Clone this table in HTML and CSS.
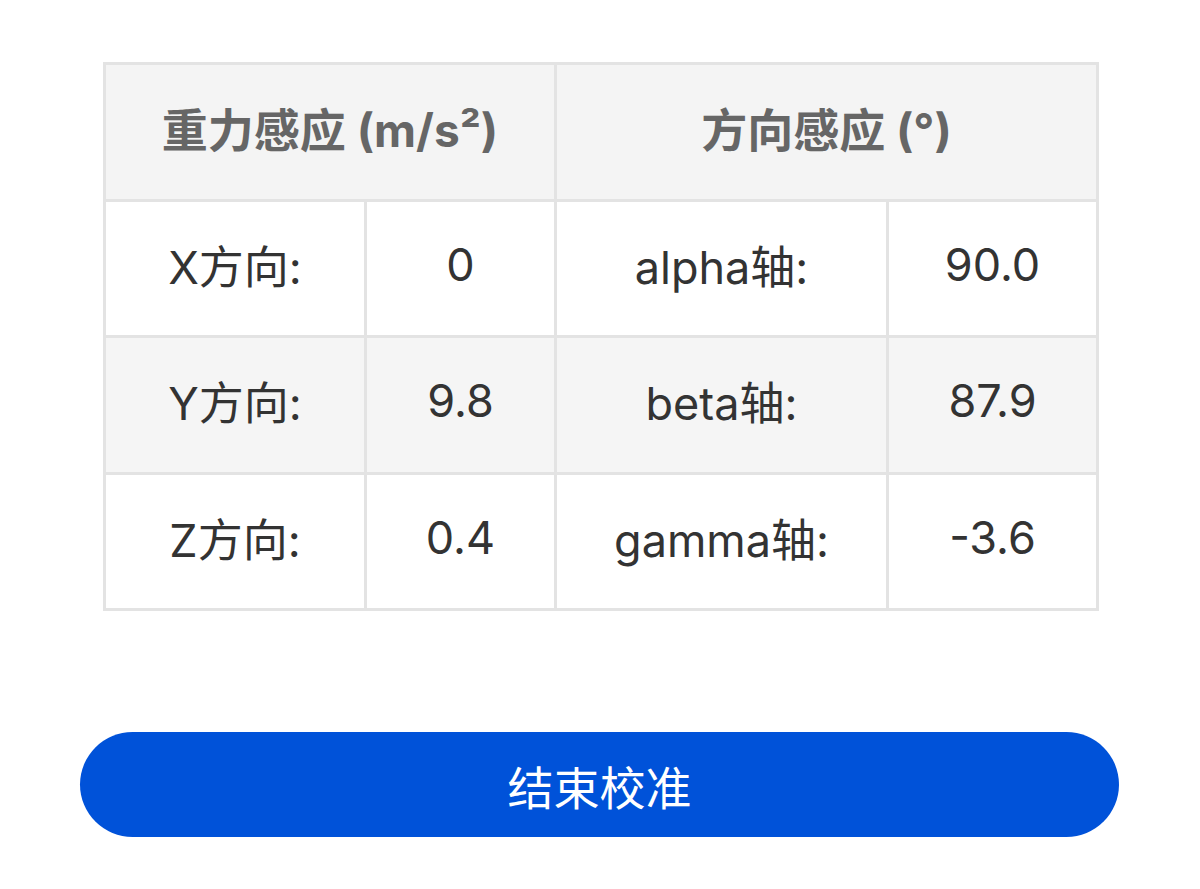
FILE: index.html
```html
<!DOCTYPE html>
<html lang="zh-CN">
<head>
<meta charset="utf-8">
<title>校准</title>
<link rel="stylesheet" href="styles.css">
</head>
<body>
<main class="page">
  <table class="sensor-table">
    <colgroup>
      <col class="c1"><col class="c2"><col class="c3"><col class="c4">
    </colgroup>
    <thead>
      <tr>
        <th colspan="2">重力感应 (m/s²)</th>
        <th colspan="2">方向感应 (°)</th>
      </tr>
    </thead>
    <tbody>
      <tr>
        <td>X方向:</td><td>0</td><td>alpha轴:</td><td>90.0</td>
      </tr>
      <tr class="striped">
        <td>Y方向:</td><td>9.8</td><td>beta轴:</td><td>87.9</td>
      </tr>
      <tr>
        <td>Z方向:</td><td>0.4</td><td>gamma轴:</td><td>-3.6</td>
      </tr>
    </tbody>
  </table>
  <div class="actions">
    <button class="end-btn" type="button">结束校准</button>
  </div>
</main>
</body>
</html>
```

FILE: styles.css
```css
html, body {
  margin: 0;
  padding: 0;
  background: #ffffff;
}

.page {
  width: 1200px;
  padding-top: 62px;
  box-sizing: border-box;
}

.sensor-table {
  margin-left: 103px;
  width: 993px;
  border-collapse: collapse;
  table-layout: fixed;
  border: 3px solid #e3e3e3;
}

.c1 { width: 261px; }
.c2 { width: 190px; }
.c3 { width: 332px; }
.c4 { width: 210px; }

.sensor-table th,
.sensor-table td {
  border: 3px solid #e3e3e3;
  text-align: center;
  vertical-align: middle;
  padding: 0 0 8px 0;
  height: 136.5px;
  box-sizing: border-box;
}

.sensor-table th {
  background: #f4f4f4;
  color: #666666;
  font-family: "Inter", "Noto Sans CJK SC", sans-serif;
  font-weight: 700;
  font-size: 46px;
  padding-bottom: 10px;
}

.sensor-table td {
  color: #333333;
  font-family: "Inter", "Noto Sans CJK SC", sans-serif;
  font-size: 45px;
  font-weight: 400;
}

.sensor-table tr.striped td {
  background: #f5f5f5;
}

.actions {
  margin-top: 121px;
  padding-left: 80px;
}

.end-btn {
  display: block;
  width: 1039px;
  height: 105px;
  border: none;
  border-radius: 53px;
  background: #0052d9;
  color: #ffffff;
  font-family: "Noto Sans CJK SC", sans-serif;
  font-size: 46px;
  font-weight: 400;
  padding: 0;
}
```
